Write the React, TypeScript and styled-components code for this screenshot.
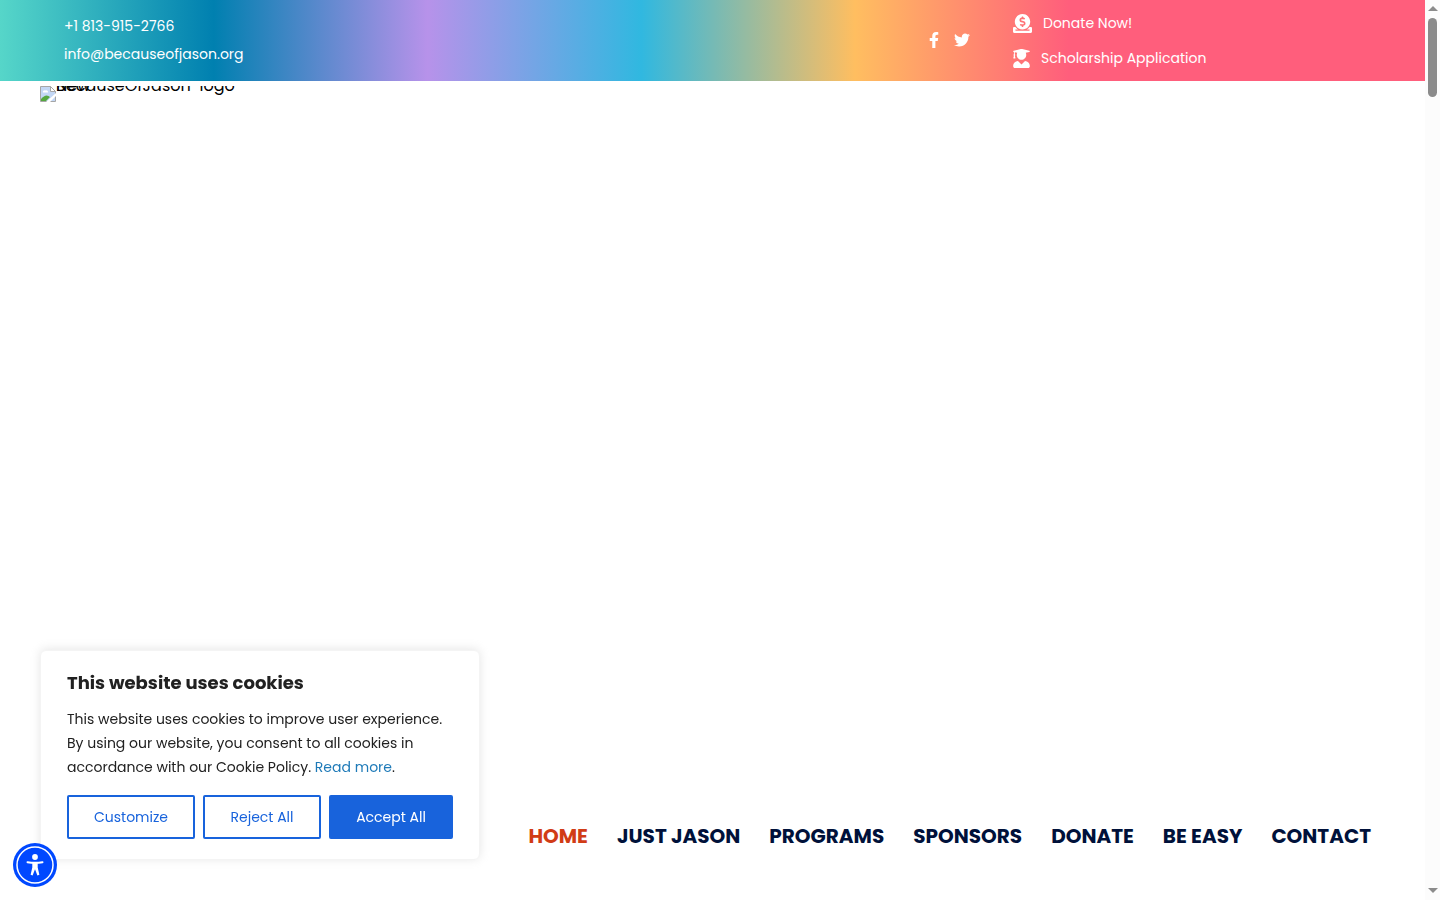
import React from 'react';
import styled, { createGlobalStyle } from 'styled-components';
import { FaDonate, FaFacebookF, FaTwitter, FaUserGraduate } from 'react-icons/fa';

const GlobalStyle = createGlobalStyle`
  *, *::before, *::after { box-sizing: border-box; }
  body {
    margin: 0;
    background: #fff;
    color: #000;
    font-family: Poppins, Inter, "Liberation Sans", sans-serif;
    font-size: 16px;
  }
  a { color: inherit; text-decoration: none; }
`;

const Page = styled.div`
  display: grid;
  grid-template-columns: minmax(0, 1fr) 15px;
  min-height: 100vh;
`;

const Content = styled.div`
  display: flex;
  flex-direction: column;
`;

const TopBar = styled.header`
  display: flex;
  align-items: center;
  min-height: 81px;
  padding: 0 64px;
  color: #fff;
  font-size: 14px;
  line-height: 28px;
  background: linear-gradient(90deg, #56d6c9 0%, #0080b0 15%, #b792ea 30%, #30b8e0 45%, #ffbe60 60%, #ff5e7c 75%);
`;

const Contact = styled.address`
  display: flex;
  flex-direction: column;
  flex: 1;
  padding-bottom: 2px;
  font-style: normal;
`;

const Glyph = styled.span<{ $width: number; $height: number }>`
  display: flex;
  width: ${({ $width }) => $width}px;
  height: ${({ $height }) => $height}px;
  svg {
    width: 100%;
    height: 100%;
  }
`;

const Social = styled.nav`
  display: flex;
  gap: 15px;
  margin-right: 43px;
  padding-bottom: 2px;
`;

const Actions = styled.nav`
  display: flex;
  flex-direction: column;
  gap: 7px;
  width: 348px;
`;

const ActionLink = styled.a`
  display: flex;
  align-items: center;
  gap: 11px;
`;

const Main = styled.main`
  display: flex;
  flex-direction: column;
  justify-content: space-between;
  flex: 1;
  padding: 5px 40px 49px;
`;

const Logo = styled.a`
  display: flex;
  height: 16px;
`;

const LogoAlt = styled.span`
  display: grid;
  height: 16px;
  overflow: hidden;
  line-height: 0;
  span { grid-area: 1 / 1; }
`;

const Menu = styled.nav`
  display: flex;
  justify-content: flex-end;
  gap: 29px;
  padding-right: 14px;
  font-size: 20px;
  font-weight: 700;
  line-height: 30px;
`;

const MenuLink = styled.a<{ $current?: boolean }>`
  color: ${({ $current }) => ($current ? '#d13c16' : '#00113a')};
`;

const CookieBanner = styled.section`
  position: fixed;
  left: 40px;
  bottom: 40px;
  width: 440px;
  padding: 18px 26px 20px;
  border: 1px solid #f4f4f4;
  border-radius: 6px;
  color: #212121;
  background: #fff;
  box-shadow: 0 -1px 10px rgba(172, 171, 171, 0.3);
`;

const CookieTitle = styled.h2`
  margin: 0 0 10px;
  font-size: 18px;
  font-weight: 700;
  line-height: 28px;
`;

const CookieText = styled.p`
  margin: 0 0 16px;
  font-size: 14px;
  line-height: 24px;
  a { color: #1e7ab8; }
`;

const ButtonRow = styled.div`
  display: grid;
  grid-template-columns: 128fr 118fr 124fr;
  gap: 8px;
`;

const CookieButton = styled.button<{ $primary?: boolean }>`
  height: 44px;
  padding: 0;
  border: 2px solid #1863dc;
  border-radius: 2px;
  color: ${({ $primary }) => ($primary ? '#fff' : '#1863dc')};
  background: ${({ $primary }) => ($primary ? '#1863dc' : 'transparent')};
  font: inherit;
  font-size: 14px;
  cursor: pointer;
`;

const AccessButton = styled.button`
  position: fixed;
  left: 13px;
  bottom: 13px;
  display: flex;
  padding: 0;
  border: 0;
  border-radius: 50%;
  background: none;
  cursor: pointer;
`;

const ScrollTrack = styled.div`
  position: sticky;
  top: 0;
  display: flex;
  flex-direction: column;
  align-items: center;
  height: 100vh;
  padding: 6px 0;
  background: #fcfcfc;
`;

const ScrollThumb = styled.div`
  flex: none;
  width: 9px;
  height: 79px;
  margin: 6px 0 auto;
  border-radius: 5px;
  background: #8b8b8b;
`;

const menu = ['HOME', 'JUST JASON', 'PROGRAMS', 'SPONSORS', 'DONATE', 'BE EASY', 'CONTACT'];

const BrokenImage = () => (
  <svg width="16" height="16" viewBox="0 0 16 16" aria-hidden="true">
    <path d="M.5 .5h10l5 5v10H.5z" fill="#c3d7f5" stroke="#a6a6a6" />
    <path d="M10.500 .5v5h5z" fill="#fff" stroke="#a6a6a6" />
    <path d="M3 6.500a1.500 1.500 0 0 1 2-2 2 2 0 0 1 3 2z" fill="#fff" />
    <path d="M1 15v-2q5-6 9-2l-4 4z" fill="#55a83f" />
    <path d="M6 16 16 7v3l-6 6z" fill="#fff" />
  </svg>
);

const AccessIcon = () => (
  <svg width="44" height="44" viewBox="0 0 44 44" aria-hidden="true">
    <circle cx="22" cy="22" r="22" fill="#0048ff" />
    <circle cx="22" cy="22" r="18" fill="none" stroke="#fff" strokeWidth="1.500" />
    <circle cx="22" cy="14" r="2.900" fill="#fff" />
    <path d="M14.500 19.200Q22 20.400 29.500 19.200" fill="none" stroke="#fff" strokeWidth="2" strokeLinecap="round" />
    <path d="M19.300 19h5.400v5.500l1.700 7.300-2 .7-2.400-6.200-2.400 6.200-2-.7 1.700-7.300z" fill="#fff" />
  </svg>
);

export default function App() {
  return (
    <Page>
      <GlobalStyle />
      <Content>
        <TopBar>
          <Contact>
            <a href="tel:+18139152766">+1 813-915-2766</a>
            <a href="mailto:info@becauseofjason.org">info@becauseofjason.org</a>
          </Contact>
          <Social aria-label="Social media">
            <a href="#facebook" aria-label="Facebook">
              <Glyph $width={10} $height={16}><FaFacebookF /></Glyph>
            </a>
            <a href="#twitter" aria-label="Twitter">
              <Glyph $width={16} $height={16}><FaTwitter /></Glyph>
            </a>
          </Social>
          <Actions aria-label="Get involved">
            <ActionLink href="#donate">
              <Glyph $width={19} $height={19}><FaDonate /></Glyph>
              Donate Now!
            </ActionLink>
            <ActionLink href="#scholarship">
              <Glyph $width={17} $height={19}><FaUserGraduate /></Glyph>
              Scholarship Application
            </ActionLink>
          </Actions>
        </TopBar>
        <Main>
          <Logo href="#home">
            <BrokenImage />
            <LogoAlt><span>New</span><span>BecauseOfJason-logo</span></LogoAlt>
          </Logo>
          <Menu aria-label="Main">
            {menu.map((label, i) => (
              <MenuLink key={label} href="#menu" $current={i === 0}>{label}</MenuLink>
            ))}
          </Menu>
        </Main>
      </Content>
      <ScrollTrack aria-hidden="true">
        <svg width="10" height="6" viewBox="0 0 10 6"><path d="M0 5 5 0l5 5z" fill="#8b8b8b" /></svg>
        <ScrollThumb />
        <svg width="10" height="6" viewBox="0 0 10 6"><path d="M0 0 5 5l5-5z" fill="#8b8b8b" /></svg>
      </ScrollTrack>
      <CookieBanner aria-labelledby="cookie-title">
        <CookieTitle id="cookie-title">This website uses cookies</CookieTitle>
        <CookieText>
          This website uses cookies to improve user experience. By using our website, you consent to all cookies in
          accordance with our Cookie Policy. <a href="#policy">Read more</a>.
        </CookieText>
        <ButtonRow>
          <CookieButton type="button">Customize</CookieButton>
          <CookieButton type="button">Reject All</CookieButton>
          <CookieButton type="button" $primary>Accept All</CookieButton>
        </ButtonRow>
      </CookieBanner>
      <AccessButton type="button" aria-label="Accessibility menu"><AccessIcon /></AccessButton>
    </Page>
  );
}
